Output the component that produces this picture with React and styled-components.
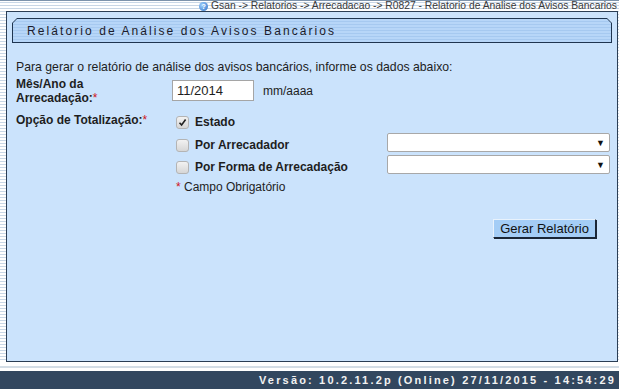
import React from "react";
import styled, { createGlobalStyle } from "styled-components";

const GlobalStyle = createGlobalStyle`
  html, body {
    margin: 0;
    padding: 0;
  }
  body {
    font-family: "Liberation Sans", Arial, sans-serif;
    background: #fff;
  }
`;

const Page = styled.div`
  width: 619px;
  height: 389px;
  display: flex;
  flex-direction: column;
  overflow: hidden;
  background: repeating-linear-gradient(
    to bottom,
    #ffffff 0px,
    #ffffff 2px,
    #c9d7e6 2px,
    #c9d7e6 3px
  );
`;

const TopBar = styled.div`
  height: 11px;
  display: flex;
  justify-content: flex-end;
  align-items: center;
  padding-right: 2px;
  gap: 3px;
  border-top: 1px solid #7d93ab;
  box-sizing: border-box;
`;

const Crumb = styled.span`
  font-size: 10.3px;
  line-height: 10px;
  color: #3a3a3a;
  white-space: nowrap;
`;

const HelpIcon = styled.span`
  width: 9px;
  height: 9px;
  border-radius: 50%;
  background: radial-gradient(circle at 35% 35%, #9fd0ff, #2b6fc4);
  color: #fff;
  font-size: 7px;
  font-weight: bold;
  line-height: 9px;
  text-align: center;
`;

const Main = styled.div`
  flex: 1;
  display: flex;
  padding: 0 1px 0 6px;
`;

const Panel = styled.section`
  flex: 1;
  background: #cbe3fc;
  border: 1px solid #2b3e55;
  padding: 6px 5px 0 5px;
  display: flex;
  flex-direction: column;
`;

const TitleFrame = styled.div`
  width: 600px;
  height: 25px;
  background: #1f3550;
  clip-path: polygon(5px 0, 595px 0, 600px 5px, 600px 100%, 0 100%, 0 5px);
  padding: 1px;
  box-sizing: border-box;
`;

const TitleInner = styled.div`
  height: 100%;
  clip-path: polygon(4px 0, 594px 0, 598px 4px, 598px 100%, 0 100%, 0 4px);
  background: repeating-linear-gradient(
    to bottom,
    #b7d6f8 0px,
    #b7d6f8 2px,
    #a6c9f0 2px,
    #a6c9f0 3px
  );
  display: flex;
  align-items: center;
  padding-left: 14px;
  font-size: 12px;
  letter-spacing: 2.08px;
  color: #1b1b2a;
`;

const Body = styled.div`
  padding: 17px 0 0 4px;
  font-size: 12.25px;
  color: #1e1e1e;
`;

const Intro = styled.p`
  margin: 0 0 3px 0;
  line-height: 14px;
`;

const Grid = styled.div`
  display: grid;
  grid-template-columns: 156px 1fr;
  align-items: start;
`;

const Label = styled.div`
  font-weight: bold;
  font-size: 12px;
  line-height: 14px;
  padding-top: ${(p) => p.$pt || 0}px;
`;

const Req = styled.span`
  color: #d0141a;
  font-weight: normal;
`;

const Row = styled.div`
  display: flex;
  align-items: center;
  gap: 9px;
`;

const TextInput = styled.div`
  width: 82px;
  height: 21px;
  box-sizing: border-box;
  background: #fff;
  border: 1px solid #a5a5a5;
  font-size: 13px;
  line-height: 19px;
  padding-left: 4px;
  margin-top: 3px;
`;

const Hint = styled.span`
  font-size: 12px;
  margin-top: 3px;
`;

const Options = styled.div`
  display: flex;
  flex-direction: column;
  padding-left: 4px;
  margin-top: 5px;
`;

const OptionRow = styled.div`
  display: flex;
  align-items: center;
  height: ${(p) => p.$h}px;
`;

const Check = styled.span`
  width: 13px;
  height: 13px;
  box-sizing: border-box;
  border: 1px solid #b4b4b4;
  border-radius: 3px;
  background: linear-gradient(#f2f2f2, #d6d6d6);
  display: flex;
  align-items: center;
  justify-content: center;
`;

const OptionLabel = styled.span`
  font-weight: bold;
  font-size: 12px;
  margin-left: 6px;
  width: 192px;
`;

const Select = styled.div`
  width: 223px;
  height: 19px;
  box-sizing: border-box;
  background: #fff;
  border: 1px solid #a8a8a8;
  border-radius: 2px;
  display: flex;
  justify-content: flex-end;
  align-items: center;
  padding-right: 4px;
  margin-bottom: 5px;
  font-size: 9px;
  color: #111;
`;

const Note = styled.div`
  font-size: 12px;
  margin-top: 2px;
`;

const Actions = styled.div`
  display: flex;
  justify-content: flex-end;
  padding-right: 16px;
  margin-top: 25px;
`;

const Button = styled.button`
  font-family: "Liberation Sans", Arial, sans-serif;
  font-size: 13px;
  color: #111;
  background: #a4cdf6;
  border: 1px solid #1a2636;
  border-top-color: #e8f2fc;
  border-left-color: #e8f2fc;
  box-shadow: 1px 1px 0 #1a2636;
  height: 19px;
  padding: 0 6px;
  line-height: 16px;
`;

const Gap = styled.div`
  height: 9px;
  background: linear-gradient(
    to bottom,
    #ffffff 0px,
    #ffffff 4px,
    #d3dde6 4px,
    #d3dde6 6px,
    #ffffff 6px
  );
`;

const Footer = styled.footer`
  height: 18px;
  background: #32475f;
  display: flex;
  justify-content: flex-end;
  align-items: center;
  padding-right: 3px;
  color: #f2f2f2;
  font-weight: bold;
  font-size: 11px;
  letter-spacing: 2.17px;
`;

const CheckMark = () => (
  <svg width="9" height="9" viewBox="0 0 9 9">
    <path d="M1.5 4.8 L3.6 7 L7.6 1.6" stroke="#222" strokeWidth="1.6" fill="none" />
  </svg>
);

export default function App() {
  return (
    <>
      <GlobalStyle />
      <Page>
        <TopBar>
          <HelpIcon>?</HelpIcon>
          <Crumb>
            Gsan -&gt; Relatorios -&gt; Arrecadacao -&gt; R0827 - Relatorio de Analise dos Avisos Bancarios
          </Crumb>
        </TopBar>
        <Main>
          <Panel>
            <TitleFrame>
              <TitleInner>Relátorio de Análise dos Avisos Bancários</TitleInner>
            </TitleFrame>
            <Body>
              <Intro>
                Para gerar o relatório de análise dos avisos bancários, informe os dados abaixo:
              </Intro>
              <Grid>
                <Label>
                  Mês/Ano da
                  <br />
                  Arrecadação:<Req>*</Req>
                </Label>
                <Row>
                  <TextInput>11/2014</TextInput>
                  <Hint>mm/aaaa</Hint>
                </Row>
                <Label $pt={8}>
                  Opção de Totalização:<Req>*</Req>
                </Label>
                <Options>
                  <OptionRow $h={24}>
                    <Check>
                      <CheckMark />
                    </Check>
                    <OptionLabel>Estado</OptionLabel>
                  </OptionRow>
                  <OptionRow $h={22}>
                    <Check />
                    <OptionLabel>Por Arrecadador</OptionLabel>
                    <Select>▼</Select>
                  </OptionRow>
                  <OptionRow $h={22}>
                    <Check />
                    <OptionLabel>Por Forma de Arrecadação</OptionLabel>
                    <Select>▼</Select>
                  </OptionRow>
                  <Note>
                    <Req>*</Req> Campo Obrigatório
                  </Note>
                </Options>
              </Grid>
              <Actions>
                <Button>Gerar Relatório</Button>
              </Actions>
            </Body>
          </Panel>
        </Main>
        <Gap />
        <Footer>Versão: 10.2.11.2p (Online) 27/11/2015 - 14:54:29</Footer>
      </Page>
    </>
  );
}
